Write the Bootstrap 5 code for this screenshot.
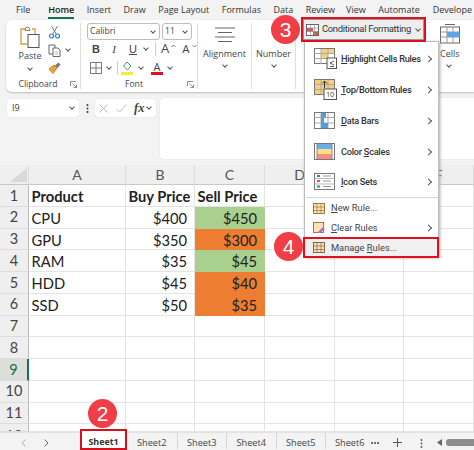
<!doctype html>
<html lang="en"><head><meta charset="utf-8">
<link href="https://cdn.jsdelivr.net/npm/bootstrap@5.3.0/dist/css/bootstrap.min.css" rel="stylesheet">
<style>
html,body{margin:0;height:450px;width:474px;overflow:hidden;background:#f3f3f3}
body{font-family:"Open Sans","Noto Sans",sans-serif;font-size:9.5px;color:#333;position:relative}
svg{display:block;flex:none}
.xl-chev{display:inline-block;width:10px;height:6px;position:relative;flex:none}
.xl-chev::after{content:"";position:absolute;left:3px;top:0;width:4px;height:4px;border-right:1px solid #555;border-bottom:1px solid #555;transform:rotate(45deg)}
.xl-tabs{height:20px;padding-left:16px;align-items:center;font-size:9px;white-space:nowrap;overflow:hidden}
.xl-tab{margin-right:12.500px;position:relative}
.xl-tab.on{font-weight:600;color:#222}
.xl-tab.on::after{content:"";position:absolute;left:0;right:0;bottom:-2px;height:2px;background:#14734a}
.xl-ribbon{height:72px;margin-left:6px;background:#fff;border-radius:6px 0 0 6px;box-shadow:0 1px 2px #bbb}
.xl-group{border-right:1px solid #dedede;margin:3px 0;flex:none;display:flex;flex-direction:column}
.xl-glabel{height:10px;line-height:10px;margin-top:auto;font-size:8.6px;color:#444;display:flex;align-items:center;padding-right:3px}
.xl-glabel span{flex:1;text-align:center}
.xl-big{text-align:center;font-size:9px;color:#444}
.xl-big div{line-height:12px}
.xl-combo{border:1px solid #bdbdbd;border-radius:3px;height:17px;font-size:8.6px;padding:0 1px 0 2px;justify-content:space-between;align-items:center;display:flex;color:#444}
.xl-r2{height:18px;padding-left:6px;color:#444;align-items:center}
.xl-r2 span{text-align:center;flex:none}
.xl-vs{border-left:1px solid #ccc;height:14px;flex:none}
.xl-formula{height:73px;padding:6px 0 6px 7px}
.xl-name{width:72px;height:18px;margin-top:1px;background:#fff;border-radius:3px;box-shadow:0 0 1px #bbb;padding:0 2px 0 5px;font-size:9px}
.xl-dots{width:16px;height:18px;margin-top:1px;align-items:center;justify-content:center}
.xl-fx{width:61px;height:18px;margin-top:1px;background:#fff;border-radius:3px;box-shadow:0 0 1px #bbb;padding:0 0 0 4px}
.xl-input{flex:1;background:#fff;border-radius:3px 0 0 3px;height:61px;margin-left:4px;box-shadow:0 0 1px #bbb}
.xl-grid{display:grid;grid-template-columns:29px 97px 69px 70px 70px 69px 70px;grid-template-rows:20px repeat(11,21.75px) 8px;font-family:Lato,"Liberation Sans",sans-serif;font-size:14.7px;color:#222;height:267px;overflow:hidden;background:#fff}
.xl-h{background:#efefef;color:#555;display:flex;align-items:center;justify-content:center;border-right:1px solid #dcdcdc;border-bottom:1px solid #c8c8c8;font-size:14px}
.xl-r{background:#efefef;color:#444;display:flex;align-items:center;justify-content:center;border-bottom:1px solid #dcdcdc;border-right:1px solid #b9b9b9;font-size:14.5px;overflow:hidden}
.xl-r.sel{background:#dcdedc;color:#14734a;border-right:2px solid #14734a}
.xl-r.cut{align-items:flex-start;line-height:21px;padding-top:1px}
.xl-c{border-right:1px solid #e4e4e4;border-bottom:1px solid #e4e4e4;padding:0 7px 0 2.5px;line-height:22px;white-space:nowrap}
.xl-num{text-align:right}
.xl-g{background:#a9d08e;border-color:#a9d08e}
.xl-o{background:#ed7d31;border-color:#ed7d31}
.xl-bottom{height:18px;background:#f3f3f3;font-size:9.2px;color:#444;white-space:nowrap;overflow:hidden;border-top:1px solid #e3e3e3;position:relative}
.xl-sheet{border-right:1px solid #d6d6d6;height:16px;line-height:20px;flex:none;width:49.5px;text-align:center}
.xl-menu{position:absolute;left:304px;top:41px;width:135px;height:216px;background:#fff;border:1px solid #bdbdbd;box-shadow:1px 1px 3px #aaa;font-family:Roboto,"Open Sans",sans-serif;font-weight:500;color:#333;font-size:9.2px;letter-spacing:-.25px;padding-top:1px}
.xl-mi{height:31px;padding-left:9px;gap:4px;align-items:center;position:relative}
.xl-mi.tight{height:30px}
.xl-ms{height:20px;padding-left:8px;gap:6px;align-items:center;position:relative;font-weight:400;font-size:9.3px;letter-spacing:0;color:#444}
.xl-arrow{position:absolute;right:7px;top:50%;width:5px;height:5px;border-top:1px solid #555;border-right:1px solid #555;transform:translateY(-50%) rotate(45deg)}
.xl-sep{border-top:1px solid #d4d4d4;margin:0 0 0 1px}
.xl-cfbtn{position:absolute;left:301px;top:17px;width:125px;height:25px;background:#ededed;border:2px solid #e0101e;box-shadow:inset 0 0 0 1px #999;align-items:center;padding-left:3px;gap:3px;font-family:Roboto,"Open Sans",sans-serif;font-size:9.4px;letter-spacing:-.3px;color:#333;white-space:nowrap}
.xl-redbox{position:absolute;left:303px;top:237px;width:136px;height:21px;border:2px solid #e0101e;background:#f0f0f0;align-items:center;padding-left:8px;gap:6px;font-family:Roboto,"Open Sans",sans-serif;font-size:9.3px;color:#444}
.xl-tabbox{position:absolute;left:80px;top:429px;width:47px;height:21px;border:2px solid #d8101c;background:#fff;font-weight:700;text-align:center;line-height:22px;font-size:8.9px;color:#333;overflow:hidden}
.xl-dot{position:absolute;width:29px;height:29px;border-radius:50%;background:#ef3e46;color:#fff;font-family:"Liberation Sans",sans-serif;font-size:21px;display:flex;align-items:center;justify-content:center}
.xl-u{text-decoration:underline}
</style></head><body>
<div class="d-flex xl-tabs"><span class="xl-tab" style="margin-right:18px">File</span><span class="xl-tab on">Home</span><span class="xl-tab">Insert</span><span class="xl-tab">Draw</span><span class="xl-tab">Page Layout</span><span class="xl-tab">Formulas</span><span class="xl-tab">Data</span><span class="xl-tab" style="margin-right:11px">Review</span><span class="xl-tab">View</span><span class="xl-tab" style="margin-right:13px">Automate</span><span class="xl-tab">Develope</span></div>
<div class="d-flex xl-ribbon">
 <div class="xl-group" style="width:75px">
  <div class="d-flex" style="padding-left:8px">
   <div style="width:32px;padding-top:3px;text-align:center;font-size:9px;color:#444">
    <svg class="mx-auto" width="22" height="22" viewBox="0 0 22 22"><path d="M7 3H2v15h6M13 3h3v5" fill="none" stroke="#d99a3e" stroke-width="1.3"/><path d="M6 4.500q0-3.500 2.500-3.500t2.500 3.500z" fill="#eee" stroke="#888"/><rect x="9" y="8.500" width="11" height="13" fill="#fff" stroke="#555"/></svg>
    <div style="line-height:12px;margin-top:2px">Paste</div>
    <span class="xl-chev"></span>
   </div>
   <div style="margin-left:2px">
    <div class="d-flex align-items-center" style="height:18px"><svg width="13" height="14" viewBox="0 0 13 14"><path d="M3.500 1l5 8.500M9.500 1l-5 8.500" stroke="#777" fill="none"/><circle cx="3.500" cy="11" r="2" fill="none" stroke="#2d7fc1" stroke-width="1.200"/><circle cx="9.500" cy="11" r="2" fill="none" stroke="#2d7fc1" stroke-width="1.200"/></svg></div>
    <div class="d-flex align-items-center" style="height:18px"><svg width="13" height="13" viewBox="0 0 13 13"><path d="M5 10H1V1h6v3" fill="#fff" stroke="#666"/><path d="M5 4h5l2 2v6.500H5z" fill="#fff" stroke="#666"/><path d="M7 8h3M7 10h3" stroke="#999" stroke-width=".7"/></svg><span class="xl-chev" style="margin-left:2px"></span></div>
    <div class="d-flex align-items-center" style="height:18px"><svg width="13" height="12" viewBox="0 0 13 12"><path d="M1 7l5-4 3 3-4 5.500z" fill="#e8a33c" stroke="#a86f1d" stroke-width=".7"/><path d="M7 3.500l3.500-3 2 2-3 3.500z" fill="#777"/></svg></div>
   </div>
  </div>
  <div class="xl-glabel"><span>Clipboard</span><svg width="7" height="7" viewBox="0 0 7 7"><path d="M.5 5V.5H6M2.500 2.500l4 4M6.500 3.500v3h-3" fill="none" stroke="#777" stroke-width=".8"/></svg></div>
 </div>
 <div class="xl-group" style="width:117px">
  <div class="d-flex" style="padding-left:6px;gap:2px"><div class="xl-combo" style="width:73px">Calibri<span class="xl-chev"></span></div><div class="xl-combo" style="width:30px">11<span class="xl-chev"></span></div></div>
  <div class="d-flex xl-r2" style="font-size:11px">
   <span style="width:18px;font-family:'Liberation Sans',sans-serif;font-weight:700">B</span>
   <span style="width:18px;font-family:'Liberation Serif',serif;font-style:italic">I</span>
   <span class="xl-u" style="width:20px;font-family:'Liberation Sans',sans-serif">U</span>
   <span class="xl-chev" style="margin-left:-2px"></span>
   <i class="xl-vs" style="margin-left:4px"></i>
   <span style="width:12px;margin-left:3px;font-size:13px">A</span><svg width="5" height="4" viewBox="0 0 5 4" style="margin:-6px 0 0 0"><path d="M.5 3l2-2 2 2" fill="none" stroke="#777"/></svg>
   <span style="width:12px;margin-left:4px;font-size:11.500px">A</span><svg width="5" height="4" viewBox="0 0 5 4" style="margin:-6px 0 0 0"><path d="M.5 1l2 2 2-2" fill="none" stroke="#4a90c8"/></svg>
  </div>
  <div class="d-flex xl-r2" style="padding-left:9px;margin-top:1px">
   <svg width="12" height="12" viewBox="0 0 12 12"><path d="M.5.5h11v11H.5zM6 .5v11M.5 6h11" fill="none" stroke="#777"/></svg>
   <span class="xl-chev" style="margin-left:2px"></span>
   <i class="xl-vs" style="margin-left:3px"></i>
   <svg style="margin-left:3px" width="12" height="14" viewBox="0 0 12 14"><path d="M6 1l4 4-3.500 4L2.500 5z" fill="#fff" stroke="#4c8f6d"/><rect x="0" y="11" width="12" height="3" fill="#f4ee2c"/></svg>
   <span class="xl-chev" style="margin-left:3px"></span>
   <span style="margin-left:5px;width:12px;font-size:11px;line-height:11px;border-bottom:3px solid #e3101e">A</span>
   <span class="xl-chev" style="margin-left:2px"></span>
  </div>
  <div class="xl-glabel"><span>Font</span><svg width="7" height="7" viewBox="0 0 7 7"><path d="M.5 5V.5H6M2.500 2.500l4 4M6.500 3.500v3h-3" fill="none" stroke="#777" stroke-width=".8"/></svg></div>
 </div>
 <div class="xl-group xl-big" style="width:54px;padding-top:4px">
  <svg class="mx-auto" width="20" height="15" viewBox="0 0 20 15"><path d="M0 1h20M3 5.500h14M0 10h20M3 14.500h14" stroke="#666"/></svg>
  <div style="margin-top:6px">Alignment</div><div><span class="xl-chev"></span></div>
 </div>
 <div class="xl-group xl-big" style="width:44px;padding-top:25px">
  <div>Number</div><div><span class="xl-chev"></span></div>
 </div>
 <div class="xl-group xl-big border-0" style="margin-left:144px;width:30px;padding-top:1px;text-align:left">
  <svg width="20" height="20" viewBox="0 0 20 20"><rect x=".5" y="3" width="19" height="16" fill="#fff" stroke="#666"/><path d="M.5 8h19M.5 13h19M7 3v16M13 3v16" stroke="#999"/><rect x="7" y="8" width="12.500" height="5" fill="#5aa7e8"/><path d="M5 .5h10" stroke="#666"/></svg>
  <div style="margin-top:4px">Cells</div><div><span class="xl-chev" style="margin-left:4px"></span></div>
 </div>
</div>
<div class="d-flex xl-formula">
 <div class="d-flex justify-content-between align-items-center xl-name"><span>I9</span><span class="xl-chev"></span></div>
 <div class="d-flex xl-dots"><svg width="3" height="9" viewBox="0 0 3 9"><path d="M1.500 0v2M1.500 3.500v2M1.500 7v2" stroke="#444" stroke-width="1.600"/></svg></div>
 <div class="d-flex align-items-center xl-fx"><svg width="9" height="9" viewBox="0 0 9 9"><path d="M.5.5l8 8M8.500.5l-8 8" stroke="#bbb"/></svg><svg style="margin-left:8px" width="11" height="9" viewBox="0 0 11 9"><path d="M.5 5l3 3 7-7.500" fill="none" stroke="#bbb"/></svg><i style="margin-left:7px;font-family:'Liberation Serif',serif;font-size:12.500px;color:#444;font-weight:700;line-height:1">fx</i><span class="xl-chev" style="margin-left:0"></span></div>
 <div class="xl-input"></div>
</div>
<div class="xl-grid" id="g"></div>
<div class="d-flex xl-bottom align-items-start">
 <div class="d-flex" style="width:127px;flex:none;padding:6px 0 0 21px;gap:18px"><svg width="5" height="8" viewBox="0 0 5 8"><path d="M4.500.5L1 4l3.500 3.500" fill="none" stroke="#aaa"/></svg><svg width="5" height="8" viewBox="0 0 5 8"><path d="M.5.500L4 4 .5 7.500" fill="none" stroke="#666"/></svg></div>
 <div class="xl-sheet" style="width:50.5px">Sheet2</div><div class="xl-sheet">Sheet3</div><div class="xl-sheet">Sheet4</div><div class="xl-sheet">Sheet5</div>
 <div style="width:39px;line-height:20px;padding-left:9px;overflow:hidden;flex:none">Sheet6</div>
 <svg style="margin:9px 0 0 6px" width="8" height="2" viewBox="0 0 8 2"><path d="M0 1h2M3 1h2M6 1h2" stroke="#444" stroke-width="1.600"/></svg>
 <svg style="margin:5px 0 0 14px" width="9" height="9" viewBox="0 0 9 9"><path d="M4.500 0v9M0 4.500h9" stroke="#555"/></svg>
 <svg style="margin:6px 0 0 18px" width="3" height="9" viewBox="0 0 3 9"><path d="M1.500 0v2M1.500 3.500v2M1.500 7v2" stroke="#555" stroke-width="1.400"/></svg>
 <svg style="margin:6px 0 0 13.500px" width="5" height="7" viewBox="0 0 5 7"><path d="M5 0v7L0 3.500z" fill="#666"/></svg>
 <div style="flex:1;height:7px;background:#8c8c8c;border-radius:3px 0 0 3px;margin:6px 0 0 4px"></div>
</div>
<div class="xl-tabbox">Sheet1</div>
<div class="xl-menu">
 <div class="d-flex xl-mi"><svg width="23" height="21" viewBox="0 0 23 21"><rect x=".5" y=".5" width="20" height="15" fill="#fff" stroke="#777"/><rect x="7" y="1" width="13" height="4.500" fill="#f7cf7a"/><rect x="7" y="5.500" width="7" height="5" fill="#f7cf7a"/><path d="M.5 5.500h20M.5 10.500h20M7 1v15M14 1v15" stroke="#aaa" fill="none"/><rect x="13" y="10" width="9.500" height="10.500" fill="#fff" stroke="#555"/><path d="M20 13l-4 2 4 2M16 18.500h4" fill="none" stroke="#333" stroke-width=".8"/></svg><span><span class="xl-u">H</span>ighlight Cells Rules</span><i class="xl-arrow"></i></div>
 <div class="d-flex xl-mi"><svg width="23" height="21" viewBox="0 0 23 21"><rect x=".5" y=".5" width="20" height="15" fill="#f7cf7a" stroke="#777"/><path d="M.5 5.500h20M.5 10.500h20M7 1v15M14 1v15" stroke="#aaa" fill="none"/><path d="M10.500 9V2M8 4.500l2.500-2.500 2.500 2.500" stroke="#333" fill="none"/><rect x="10" y="10" width="12.500" height="10.500" fill="#fff" stroke="#555"/><text x="12" y="18" font-size="7.500" fill="#444" font-family="Open Sans">10</text></svg><span><span class="xl-u">T</span>op/Bottom Rules</span><i class="xl-arrow"></i></div>
 <div class="d-flex xl-mi"><svg width="23" height="18" viewBox="0 0 23 18"><rect x=".5" y=".5" width="20" height="16" fill="#fff" stroke="#777"/><path d="M.5 5.500h20M.5 11h20M7 1v15M14 1v15" stroke="#aaa"/><rect x="7" y="1" width="5" height="4.500" fill="#4f9fe0"/><rect x="7" y="5.500" width="3" height="5.500" fill="#4f9fe0"/><rect x="7" y="11" width="7" height="5" fill="#4f9fe0"/></svg><span><span class="xl-u">D</span>ata Bars</span><i class="xl-arrow"></i></div>
 <div class="d-flex xl-mi"><svg width="23" height="18" viewBox="0 0 23 18"><rect x=".5" y=".5" width="20" height="16" fill="#fff" stroke="#777"/><rect x="3" y="1" width="15" height="5" fill="#69aee8"/><rect x="3" y="6" width="15" height="5" fill="#fbe08a"/><rect x="3" y="11" width="15" height="5" fill="#f58f85"/><path d="M3 1v15M18 1v15" stroke="#888"/></svg><span>Color <span class="xl-u">S</span>cales</span><i class="xl-arrow"></i></div>
 <div class="d-flex xl-mi tight"><svg width="23" height="18" viewBox="0 0 23 18"><rect x=".5" y=".5" width="20" height="16" fill="#fff" stroke="#777"/><path d="M.5 5.500h20M.5 11h20" stroke="#bbb"/><path d="M3 3h3" stroke="#38a" stroke-width="2"/><path d="M3 8h3" stroke="#d55" stroke-width="2"/><path d="M3 13.500h3" stroke="#38a" stroke-width="2"/><path d="M9 3h8M9 8h8M9 13.500h8" stroke="#999"/></svg><span><span class="xl-u">I</span>con Sets</span><i class="xl-arrow"></i></div>
 <div class="xl-sep"></div>
 <div class="d-flex xl-ms"><svg width="12" height="11" viewBox="0 0 12 11"><rect x=".5" y=".5" width="11" height="10" fill="#fbe3b4" stroke="#a6793a"/><path d="M.5 4h11M.5 7.500h11M4 1v10M8 1v10" stroke="#a6793a" stroke-width=".7"/></svg><span><span class="xl-u">N</span>ew Rule...</span></div>
 <div class="d-flex xl-ms"><svg width="12" height="12" viewBox="0 0 12 12"><rect x=".5" y=".5" width="10" height="10" fill="#fbe3b4" stroke="#a6793a"/><path d="M4 11l6-6 2 2-5 4z" fill="#b36ad0"/></svg><span><span class="xl-u">C</span>lear Rules</span><i class="xl-arrow"></i></div>
</div>
<div class="d-flex xl-redbox"><svg width="12" height="11" viewBox="0 0 12 11"><rect x=".5" y=".5" width="11" height="10" fill="#fbe3b4" stroke="#7d6a4a"/><path d="M.5 4h11M.5 7.500h11M4 1v10M8 1v10" stroke="#7d6a4a" stroke-width=".7"/></svg><span>Manage <span class="xl-u">R</span>ules...</span></div>
<div class="d-flex xl-cfbtn"><svg width="13" height="12" viewBox="0 0 13 12"><rect x=".5" y=".5" width="12" height="11" fill="#fff" stroke="#666"/><rect x="1" y="4" width="6" height="3.500" fill="#e5534b"/><rect x="7" y="7.500" width="5" height="3.500" fill="#e5534b"/><path d="M.5 4h12M.5 7.500h12M4.500 1v10M8.500 1v10" stroke="#888" stroke-width=".6"/></svg><span>Conditional Formatting</span><span class="xl-chev" style="margin-left:-1px"></span></div>
<div class="xl-dot" style="left:271px;top:15px">3</div>
<div class="xl-dot" style="left:274px;top:232px">4</div>
<div class="xl-dot" style="left:88px;top:399px">2</div>
<script>
var rows=[["Product","Buy Price","Sell Price"],["CPU","$400","$450"],["GPU","$350","$300"],["RAM","$35","$45"],["HDD","$45","$40"],["SSD","$50","$35"]];
var fill=["","xl-g","xl-o","xl-g","xl-o","xl-o"],h='<div class="xl-h"><svg width="27" height="18" viewBox="0 0 27 18"><path d="M26 2v14H9z" fill="#d9d9d9"/></svg></div>';
"ABCDEF".split("").forEach(function(c){h+='<div class="xl-h">'+c+'</div>'});
for(var r=0;r<12;r++){
 h+='<div class="xl-r'+(r==8?' sel':'')+(r==11?' cut':'')+'">'+(r+1)+'</div>';
 var d=rows[r];
 for(var c=0;c<6;c++){
  var cls='xl-c',t='';
  if(d&&c<3){t=d[c];if(r==0)cls+=' fw-bold';else if(c)cls+=' xl-num';if(r>0&&c==2)cls+=' '+fill[r]}
  h+='<div class="'+cls+'">'+t+'</div>';
 }
}
document.getElementById('g').innerHTML=h;
</script>
<script src="https://cdn.jsdelivr.net/npm/bootstrap@5.3.0/dist/js/bootstrap.bundle.min.js"></script>
</body></html>
